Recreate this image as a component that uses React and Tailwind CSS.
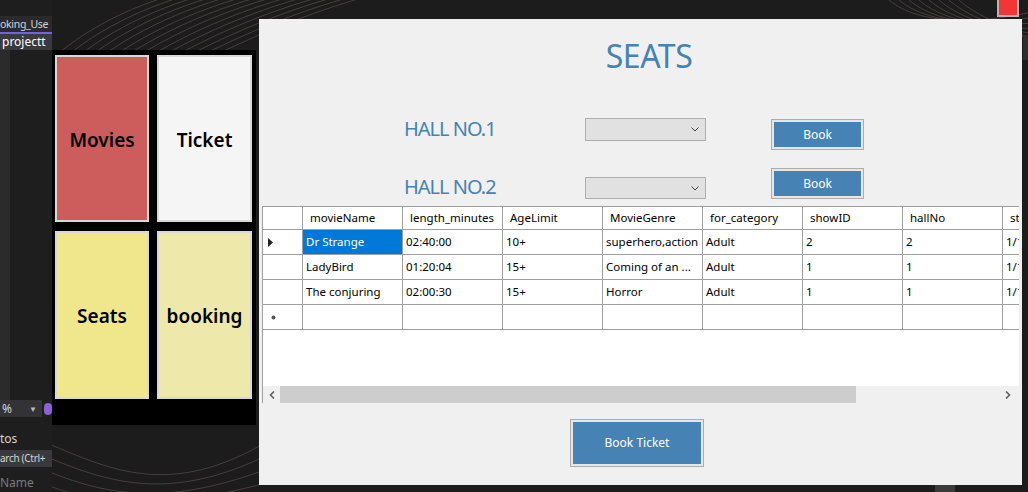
import React from "react"

const cols = ["movieName", "length_minutes", "AgeLimit", "MovieGenre", "for_category", "showID", "hallNo", "st"]

const rows = [
  ["Dr Strange", "02:40:00", "10+", "superhero,action", "Adult", "2", "2", "1/1"],
  ["LadyBird", "01:20:04", "15+", "Coming of an ...", "Adult", "1", "1", "1/1"],
  ["The conjuring", "02:00:30", "15+", "Horror", "Adult", "1", "1", "1/1"]
]

function Contours() {
  const lines = []
  for (let i = 0; i < 14; i++) {
    const o = i * 11
    lines.push(
      <path
        key={"a" + i}
        d={`M ${40 + o} ${70} C ${120 + o} ${-10 + o * 0.3}, ${260 + o} ${-40}, ${420 + o} ${-20}`}
      />
    )
  }
  for (let i = 0; i < 8; i++) {
    const o = i * 10
    lines.push(
      <path
        key={"b" + i}
        d={`M ${880 + o} ${-10} C ${900 + o} ${20}, ${960 + o} ${30}, ${1040} ${10 + o * 0.6}`}
      />
    )
  }
  for (let i = 0; i < 6; i++) {
    const o = i * 14
    lines.push(
      <path
        key={"c" + i}
        d={`M ${40} ${440 + o} C ${110} ${470 + o}, ${170} ${500 + o * 0.2}, ${270} ${440 + o}`}
      />
    )
  }
  return (
    <svg className="absolute inset-0" width="1028" height="492" fill="none" stroke="#6b5a5a" strokeOpacity="0.55" strokeWidth="1">
      {lines}
    </svg>
  )
}

function Tile({ label, bg }) {
  return (
    <div className={`flex items-center justify-center border-2 border-[#d8d8d8] pt-[3px] ${bg}`}>
      <span className="text-[19px] font-semibold text-black">{label}</span>
    </div>
  )
}

function Combo() {
  return (
    <div className="flex h-full w-[121px] items-center justify-end border border-[#adadad] bg-[#e1e1e1] pr-[6px]">
      <svg width="8" height="5" viewBox="0 0 8 5" fill="none" stroke="#404040" strokeWidth="1">
        <path d="M0.5 0.5 L4 4 L7.5 0.5" />
      </svg>
    </div>
  )
}

function BlueButton({ label, w, h }) {
  return (
    <div className={`border border-[#adadad] bg-[#e6e6e6] p-[2px] ${w} ${h}`}>
      <div className="flex h-full w-full items-center justify-center bg-[#4682b4] text-[12px] text-white">
        {label}
      </div>
    </div>
  )
}

function Grid() {
  return (
    <div className="relative ml-[3px] h-[197px] w-[757px] overflow-hidden border-l border-t border-[#a0a0a0] bg-white text-[11.5px] text-black">
      <div className="flex h-[23px]">
        <div className="w-[40px] shrink-0 border-b border-r border-[#a0a0a0]" />
        {cols.map((c) => (
          <div key={c} className="flex w-[100px] shrink-0 items-center border-b border-r border-[#a0a0a0] pl-[7px] whitespace-nowrap">
            {c}
          </div>
        ))}
      </div>
      {rows.map((r, ri) => (
        <div key={ri} className="flex h-[25px]">
          <div className="flex w-[40px] shrink-0 items-center border-b border-r border-[#a0a0a0] pl-[5px]">
            {ri === 0 && (
              <svg width="6" height="9" viewBox="0 0 6 9">
                <path d="M0 0 L5 4.5 L0 9 Z" fill="#222" />
              </svg>
            )}
          </div>
          {r.map((v, ci) => (
            <div
              key={ci}
              className={`flex w-[100px] shrink-0 items-center overflow-hidden border-b border-r border-[#a0a0a0] pl-[3px] whitespace-nowrap ${ri === 0 && ci === 0 ? "bg-[#0078d7] text-white" : ""}`}
            >
              {v}
            </div>
          ))}
        </div>
      ))}
      <div className="flex h-[25px]">
        <div className="flex w-[40px] shrink-0 items-center border-b border-r border-[#a0a0a0] pl-[8px]">
          <svg width="5" height="5" viewBox="0 0 5 5" fill="#555">
            <circle cx="2.5" cy="2.5" r="2" />
          </svg>
        </div>
        {cols.map((c) => (
          <div key={c} className="w-[100px] shrink-0 border-b border-r border-[#a0a0a0]" />
        ))}
      </div>
      <div className="absolute bottom-0 left-0 flex h-[17px] w-full bg-[#f0f0f0]">
        <div className="flex w-[17px] items-center justify-center">
          <svg width="6" height="8" viewBox="0 0 6 8" fill="none" stroke="#606060" strokeWidth="1.6">
            <path d="M5 0.5 L1.5 4 L5 7.5" />
          </svg>
        </div>
        <div className="w-[576px] bg-[#cdcdcd]" />
        <div className="flex flex-1 items-center justify-end pr-[8px]">
          <svg width="6" height="8" viewBox="0 0 6 8" fill="none" stroke="#606060" strokeWidth="1.6">
            <path d="M1 0.5 L4.5 4 L1 7.5" />
          </svg>
        </div>
      </div>
    </div>
  )
}

export default function App() {
  return (
    <div className="relative h-[492px] w-[1028px] overflow-hidden bg-[#1c1c1c] font-['Noto_Sans',sans-serif]">
      <Contours />

      {/* IDE strip on the left */}
      <div className="absolute left-0 top-0 flex h-full w-[52px] flex-col bg-[#1e1e1e] text-[12px] text-[#d4d4d4]">
        <div className="h-[16px]" />
        <div className="h-[16px] overflow-hidden whitespace-nowrap bg-[#2a2a2c] text-[10.5px] leading-[16px] tracking-[-0.3px]">oking_Use</div>
        <div className="h-[2px] bg-[#7160e8]" />
        <div className="h-[16px] overflow-hidden whitespace-nowrap bg-[#3a3a3d] pl-[2px] leading-[16px] text-white">projectt</div>
        <div className="flex h-[350px]">
          <div className="w-[10px] bg-[#2b2b2b]" />
          <div className="flex-1 bg-[#1e1e1e]" />
        </div>
        <div className="flex h-[17px] items-center">
          <div className="flex h-full w-[42px] items-center justify-between bg-[#333337] pl-[2px] pr-[5px]">
            <span>%</span>
            <span className="text-[8px] text-[#bbb]">▼</span>
          </div>
          <div className="ml-[2px] h-[12px] w-[8px] rounded-sm bg-[#8a62d6]" />
        </div>
        <div className="h-[11px]" />
        <div className="h-[22px] leading-[22px]">tos</div>
        <div className="h-[17px] overflow-hidden whitespace-nowrap bg-[#3a3a3d] text-[10px] leading-[17px] tracking-[-0.3px]">arch (Ctrl+</div>
        <div className="h-[25px] overflow-hidden whitespace-nowrap pt-[8px] leading-[16px] text-[#7a7a7a]">Name</div>
      </div>

      {/* Menu tiles */}
      <div className="absolute left-[52px] top-[50px] grid h-[375px] w-[204px] grid-cols-[94px_95px] grid-rows-[167px_168px] gap-x-[8px] gap-y-[9px] bg-black pl-[3px] pt-[5px]">
        <Tile label="Movies" bg="bg-[#cd5c5c]" />
        <Tile label="Ticket" bg="bg-[#f5f5f5]" />
        <Tile label="Seats" bg="bg-[#f0e68c]" />
        <Tile label="booking" bg="bg-[#eee8aa]" />
      </div>

      {/* red close box */}
      <div className="absolute left-[997px] top-0 h-[17px] w-[22px] border-2 border-t-0 border-[#b5b5b5] bg-[#f23636]" />

      {/* right edge bits */}
      <div className="absolute left-[1023px] top-[35px] h-[25px] w-[5px] bg-[#2e2e2e]" />
      <div className="absolute left-[935px] top-[485px] h-[7px] w-[20px] bg-[#3a3a3a]" />

      {/* Seats form */}
      <div className="absolute left-[259px] top-[19px] flex h-[466px] w-[763px] flex-col bg-[#f0f0f0] pt-[18px]">
        <h1 className="h-[38px] pl-[17px] text-center text-[32px] leading-[38px] tracking-[-0.5px] text-[#4682b4]">SEATS</h1>

        <div className="mt-[43px] flex h-[32px] items-start">
          <div className="ml-[145px] mt-[-3px] w-[181px] text-[20px] leading-[28px] tracking-[-1px] text-[#4682b4]">HALL NO.1</div>
          <div className="h-[23px]">
            <Combo />
          </div>
          <div className="ml-[65px] mt-[1px]">
            <BlueButton label="Book" w="w-[93px]" h="h-[31px]" />
          </div>
        </div>

        <div className="mt-[18px] flex h-[31px] items-start">
          <div className="ml-[145px] mt-[5px] w-[181px] text-[20px] leading-[28px] tracking-[-1px] text-[#4682b4]">HALL NO.2</div>
          <div className="mt-[9px] h-[22px]">
            <Combo />
          </div>
          <div className="ml-[65px]">
            <BlueButton label="Book" w="w-[93px]" h="h-[31px]" />
          </div>
        </div>

        <div className="mt-[7px]">
          <Grid />
        </div>

        <div className="ml-[311px] mt-[16px]">
          <BlueButton label="Book Ticket" w="w-[134px]" h="h-[48px]" />
        </div>
      </div>
    </div>
  )
}
